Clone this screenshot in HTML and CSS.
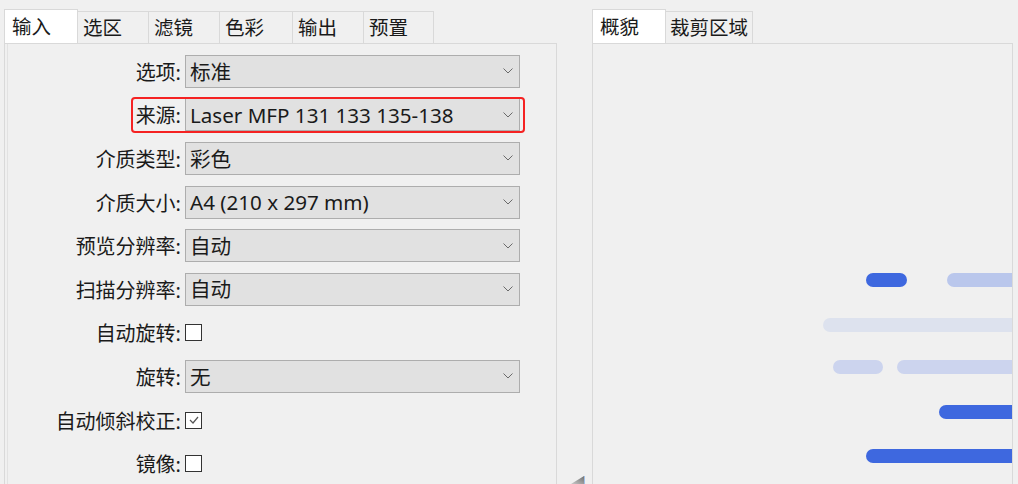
FILE: index.html
```html
<!DOCTYPE html>
<html lang="zh-CN">
<head>
<meta charset="utf-8">
<title>扫描设置</title>
<link rel="stylesheet" href="styles.css">
</head>
<body>
<div class="app">
  <section class="left">
    <div class="tabs">
      <div class="tab active">输入</div>
      <div class="tab">选区</div>
      <div class="tab">滤镜</div>
      <div class="tab">色彩</div>
      <div class="tab">输出</div>
      <div class="tab">预置</div>
    </div>
    <div class="panel">
      <div class="inner">
        <div class="row"><span class="label">选项:</span><div class="select"><span class="value">标准</span><svg class="chev" width="10" height="6" viewBox="0 0 10 6"><polyline points="0.5,0.5 5,5 9.5,0.5" fill="none" stroke="#6a6a6a" stroke-width="1"/></svg></div></div>
        <div class="row hl"><span class="label">来源:</span><div class="select"><span class="value">Laser MFP 131 133 135-138</span><svg class="chev" width="10" height="6" viewBox="0 0 10 6"><polyline points="0.5,0.5 5,5 9.5,0.5" fill="none" stroke="#6a6a6a" stroke-width="1"/></svg></div></div>
        <div class="row"><span class="label">介质类型:</span><div class="select"><span class="value">彩色</span><svg class="chev" width="10" height="6" viewBox="0 0 10 6"><polyline points="0.5,0.5 5,5 9.5,0.5" fill="none" stroke="#6a6a6a" stroke-width="1"/></svg></div></div>
        <div class="row"><span class="label">介质大小:</span><div class="select"><span class="value">A4 (210 x 297 mm)</span><svg class="chev" width="10" height="6" viewBox="0 0 10 6"><polyline points="0.5,0.5 5,5 9.5,0.5" fill="none" stroke="#6a6a6a" stroke-width="1"/></svg></div></div>
        <div class="row"><span class="label">预览分辨率:</span><div class="select"><span class="value">自动</span><svg class="chev" width="10" height="6" viewBox="0 0 10 6"><polyline points="0.5,0.5 5,5 9.5,0.5" fill="none" stroke="#6a6a6a" stroke-width="1"/></svg></div></div>
        <div class="row"><span class="label">扫描分辨率:</span><div class="select"><span class="value">自动</span><svg class="chev" width="10" height="6" viewBox="0 0 10 6"><polyline points="0.5,0.5 5,5 9.5,0.5" fill="none" stroke="#6a6a6a" stroke-width="1"/></svg></div></div>
        <div class="row"><span class="label">自动旋转:</span><span class="check"></span></div>
        <div class="row"><span class="label">旋转:</span><div class="select"><span class="value">无</span><svg class="chev" width="10" height="6" viewBox="0 0 10 6"><polyline points="0.5,0.5 5,5 9.5,0.5" fill="none" stroke="#6a6a6a" stroke-width="1"/></svg></div></div>
        <div class="row"><span class="label">自动倾斜校正:</span><span class="check"><svg width="14" height="14" viewBox="0 0 14 14"><polyline points="3,7 6,10 11,4" fill="none" stroke="#555" stroke-width="1.2"/></svg></span></div>
        <div class="row"><span class="label">镜像:</span><span class="check"></span></div>
      </div>
    </div>
  </section>
  <div class="splitter">
    <svg class="grip" width="14" height="8" viewBox="0 0 14 8"><defs><linearGradient id="g" x1="0" y1="1" x2="1" y2="0"><stop offset="0" stop-color="#c8c8c8"/><stop offset="1" stop-color="#707070"/></linearGradient></defs><polygon points="0,8 13,0 13,8" fill="url(#g)"/><line x1="13.5" y1="0" x2="13.5" y2="8" stroke="#9fc0e8"/></svg>
  </div>
  <section class="right">
    <div class="tabs">
      <div class="tab active rt1">概貌</div>
      <div class="tab rt2">裁剪区域</div>
    </div>
    <div class="panel preview">
      <div class="canvas">
        <span class="bar dark" style="left:273px;top:229px;width:41px"></span>
        <span class="bar light" style="left:354px;top:229px;width:120px"></span>
        <span class="bar pale" style="left:230px;top:274px;width:240px"></span>
        <span class="bar mid" style="left:240px;top:316px;width:50px"></span>
        <span class="bar mid" style="left:304px;top:316px;width:160px"></span>
        <span class="bar dark" style="left:346px;top:361px;width:120px"></span>
        <span class="bar dark" style="left:273px;top:405px;width:200px"></span>
      </div>
    </div>
  </section>
</div>
</body>
</html>
```
FILE: styles.css
```css
html, body {
  margin: 0;
  padding: 0;
  overflow: hidden;
}
body {
  background: #f0f0f0;
  font-family: "Noto Sans", "Noto Sans CJK SC", sans-serif;
  color: #1a1a1a;
  width: 1018px;
  height: 484px;
}
.app {
  display: flex;
  padding-top: 9px;
  height: 475px;
}
.left {
  margin-left: 4px;
  width: 553px;
  display: flex;
  flex-direction: column;
}
.tabs {
  display: flex;
  align-items: flex-end;
  height: 34px;
}
.tab {
  box-sizing: border-box;
  height: 32px;
  width: 71px;
  border: 1px solid #d9d9d9;
  border-bottom: none;
  border-left: none;
  background: #f0f0f0;
  font-size: 19.5px;
  line-height: 31px;
  padding-left: 5px;
  color: #1a1a1a;
}
.tab.active {
  height: 34px;
  width: 74px;
  background: #fff;
  border-left: 1px solid #d9d9d9;
  padding-left: 7px;
  line-height: 34px;
}
.tabs .tab:nth-child(3) { width: 71px; }
.tabs .tab:nth-child(4) { width: 73px; }
.tabs .tab:nth-child(6) { width: 70px; }
.panel {
  flex: 1;
  border: 1px solid #d9d9d9;
  border-bottom: none;
  background: #f0f0f0;
}
.inner {
  margin-left: 2px;
  height: 100%;
  border-left: 1px solid #e2e2e2;
  padding-top: 5.5px;
  box-sizing: border-box;
}
.row {
  position: relative;
  display: grid;
  grid-template-columns: 174px 335px;
  column-gap: 3px;
  align-items: center;
  height: 43.6px;
}
.label {
  text-align: right;
  font-size: 20px;
  white-space: nowrap;
  margin-right: 1px;
}
.select {
  box-sizing: border-box;
  height: 33px;
  background: #e1e1e1;
  border: 1px solid #adadad;
  display: flex;
  align-items: center;
  justify-content: space-between;
  padding: 0 6px 0 4px;
}
.value {
  font-size: 20.6px;
  white-space: nowrap;
  line-height: 1;
  padding-top: 1px;
}
.chev {
  display: block;
}
.check {
  box-sizing: border-box;
  width: 17px;
  height: 17px;
  border: 1px solid #333;
  background: #fff;
  display: flex;
  align-items: center;
  justify-content: center;
}
.check svg {
  display: block;
}
.row.hl::after {
  content: "";
  position: absolute;
  left: 123px;
  top: 4px;
  width: 394px;
  height: 36px;
  box-sizing: border-box;
  border: 2px solid #f52222;
  border-radius: 4px;
}
.splitter {
  position: relative;
  width: 35px;
}
.grip {
  position: absolute;
  left: 14px;
  bottom: 0;
}
.right {
  width: 421px;
  display: flex;
  flex-direction: column;
}
.right .tab.rt1 {
  width: 74px;
}
.right .tab.rt2 {
  width: 87px;
  padding-left: 4px;
}
.preview {
  position: relative;
  overflow: hidden;
}
.canvas {
  position: absolute;
  inset: 0;
}
.bar {
  position: absolute;
  height: 14px;
  border-radius: 7px;
}
.bar.dark { background: #3e68df; }
.bar.light { background: #bac7ec; }
.bar.pale { background: #dde2ee; }
.bar.mid { background: #ccd4ee; }
```
